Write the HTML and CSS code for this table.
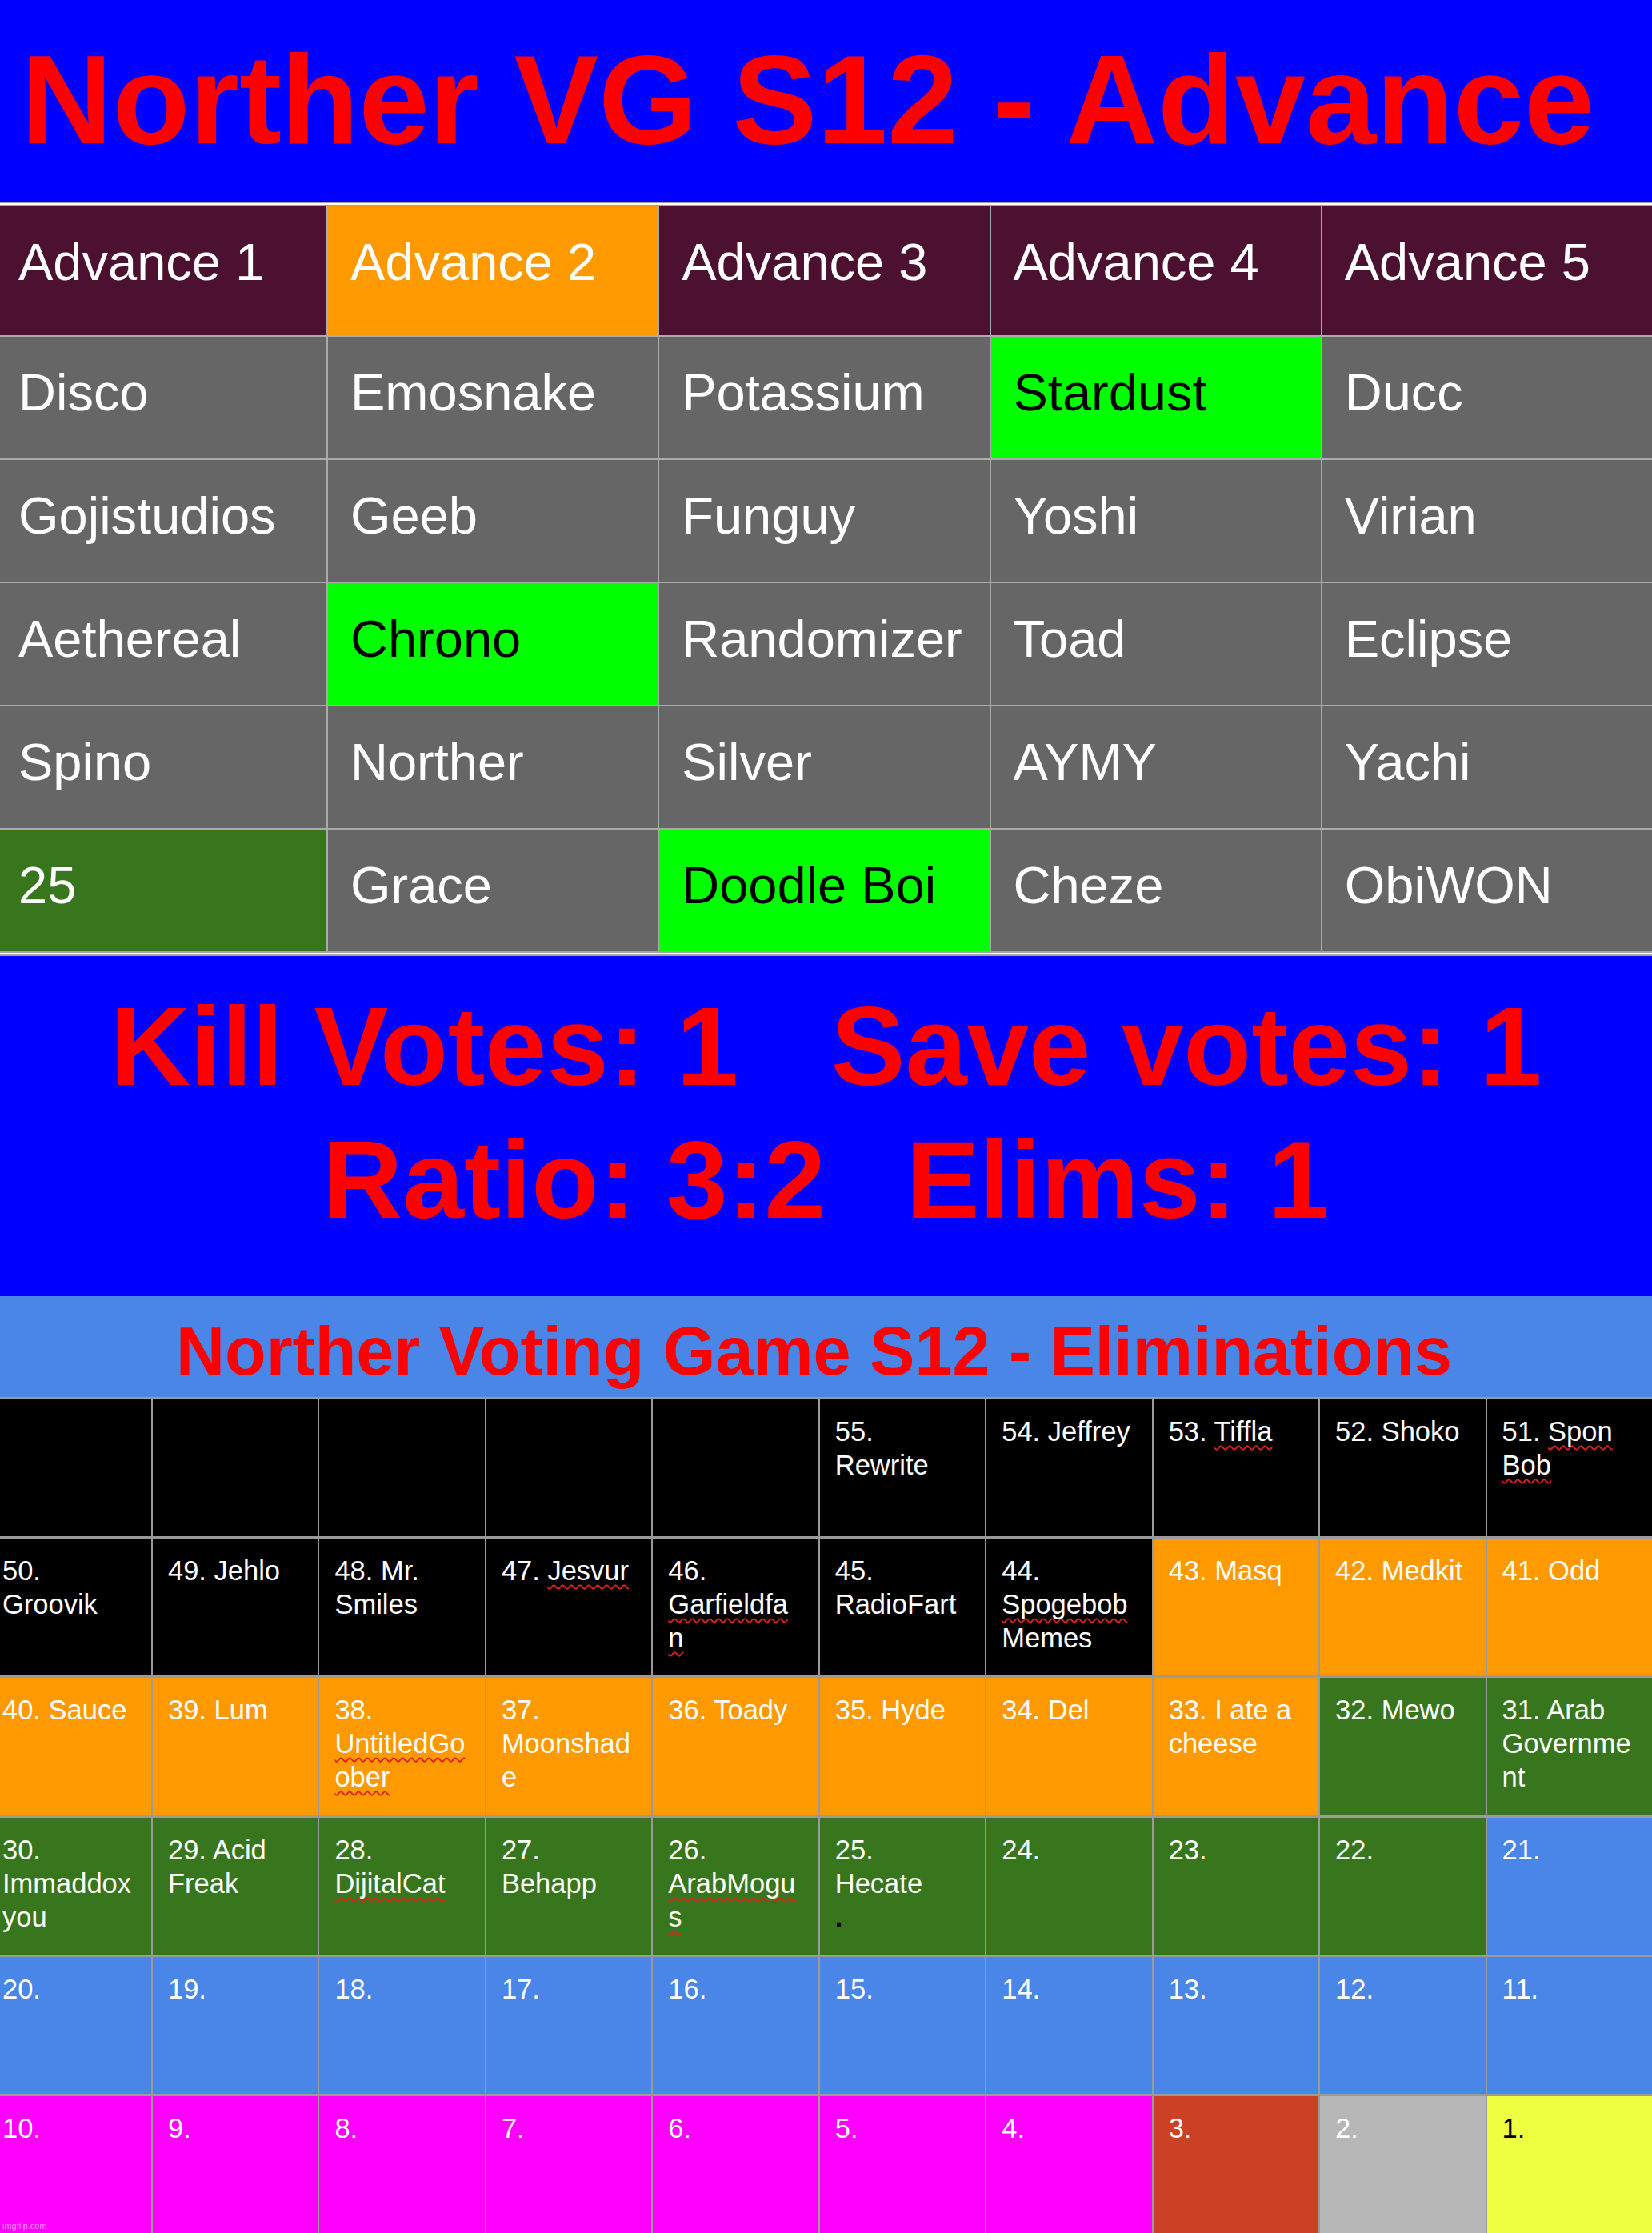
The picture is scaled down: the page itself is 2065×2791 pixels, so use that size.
FILE: index.html
```html
<!DOCTYPE html>
<html lang="en">
<head>
<meta charset="utf-8">
<title>Norther VG S12 - Advance</title>
<link rel="stylesheet" href="styles.css">
</head>
<body>
<div class="page">
  <header class="title">Norther VG S12 - Advance</header>

  <section class="adv-wrap">
    <div class="adv-grid">
      <div class="ac head">Advance 1</div>
      <div class="ac orange">Advance 2</div>
      <div class="ac head">Advance 3</div>
      <div class="ac head">Advance 4</div>
      <div class="ac head">Advance 5</div>

      <div class="ac">Disco</div>
      <div class="ac">Emosnake</div>
      <div class="ac">Potassium</div>
      <div class="ac lime">Stardust</div>
      <div class="ac">Ducc</div>

      <div class="ac">Gojistudios</div>
      <div class="ac">Geeb</div>
      <div class="ac">Funguy</div>
      <div class="ac">Yoshi</div>
      <div class="ac">Virian</div>

      <div class="ac">Aethereal</div>
      <div class="ac lime">Chrono</div>
      <div class="ac">Randomizer</div>
      <div class="ac">Toad</div>
      <div class="ac">Eclipse</div>

      <div class="ac">Spino</div>
      <div class="ac">Norther</div>
      <div class="ac">Silver</div>
      <div class="ac">AYMY</div>
      <div class="ac">Yachi</div>

      <div class="ac forest">25</div>
      <div class="ac">Grace</div>
      <div class="ac lime">Doodle Boi</div>
      <div class="ac">Cheze</div>
      <div class="ac">ObiWON</div>
    </div>
  </section>

  <section class="votes">
    <p class="votes-line">Kill Votes: 1&nbsp;&nbsp; Save votes: 1</p>
    <p class="votes-line second">Ratio: 3:2<span class="votes-gap"></span>Elims: 1</p>
  </section>

  <section class="elim-head">Norther Voting Game S12 - Eliminations</section>

  <div class="elim-grid">
    <div class="ec k"></div>
    <div class="ec k"></div>
    <div class="ec k"></div>
    <div class="ec k"></div>
    <div class="ec k"></div>
    <div class="ec k">55. Rewrite</div>
    <div class="ec k">54. Jeffrey</div>
    <div class="ec k">53. <span class="sp">Tiffla</span></div>
    <div class="ec k">52. Shoko</div>
    <div class="ec k">51. <span class="sp">Spon</span> <span class="sp">Bob</span></div>

    <div class="ec k">50. Groovik</div>
    <div class="ec k">49. Jehlo</div>
    <div class="ec k">48. Mr. Smiles</div>
    <div class="ec k">47. <span class="sp">Jesvur</span></div>
    <div class="ec k">46. <span class="sp">Garfieldfan</span></div>
    <div class="ec k">45. RadioFart</div>
    <div class="ec k">44. <span class="sp">Spogebob</span> Memes</div>
    <div class="ec o">43. Masq</div>
    <div class="ec o">42. Medkit</div>
    <div class="ec o">41. Odd</div>

    <div class="ec o">40. Sauce</div>
    <div class="ec o">39. Lum</div>
    <div class="ec o">38. <span class="sp">UntitledGoober</span></div>
    <div class="ec o">37. Moonshade</div>
    <div class="ec o">36. Toady</div>
    <div class="ec o">35. Hyde</div>
    <div class="ec o">34. Del</div>
    <div class="ec o">33. I ate a cheese</div>
    <div class="ec g">32. Mewo</div>
    <div class="ec g">31. Arab Government</div>

    <div class="ec g">30. Immaddox you</div>
    <div class="ec g">29. Acid Freak</div>
    <div class="ec g">28. <span class="sp">DijitalCat</span></div>
    <div class="ec g">27. Behapp</div>
    <div class="ec g">26. <span class="sp">ArabMogus</span></div>
    <div class="ec g">25. Hecate<br><span class="dot">.</span></div>
    <div class="ec g">24.</div>
    <div class="ec g">23.</div>
    <div class="ec g">22.</div>
    <div class="ec b">21.</div>

    <div class="ec b">20.</div>
    <div class="ec b">19.</div>
    <div class="ec b">18.</div>
    <div class="ec b">17.</div>
    <div class="ec b">16.</div>
    <div class="ec b">15.</div>
    <div class="ec b">14.</div>
    <div class="ec b">13.</div>
    <div class="ec b">12.</div>
    <div class="ec b">11.</div>

    <div class="ec m">10.</div>
    <div class="ec m">9.</div>
    <div class="ec m">8.</div>
    <div class="ec m">7.</div>
    <div class="ec m">6.</div>
    <div class="ec m">5.</div>
    <div class="ec m">4.</div>
    <div class="ec r">3.</div>
    <div class="ec s">2.</div>
    <div class="ec y">1.</div>
  </div>

  <span class="watermark">imgflip.com</span>
</div>
</body>
</html>
```
FILE: styles.css
```css
html, body {
  margin: 0;
  padding: 0;
  background: #ffffff;
}

body {
  width: 2065px;
  height: 2791px;
  overflow: hidden;
  font-family: "Liberation Sans", Arial, sans-serif;
}

.page {
  position: relative;
  width: 2065px;
  height: 2791px;
  display: flex;
  flex-direction: column;
}

/* ---------- Title ---------- */
.title {
  box-sizing: border-box;
  height: 252px;
  background: #0000ff;
  color: #ff0000;
  font-weight: bold;
  font-size: 158.5px;
  line-height: 159px;
  padding: 45px 0 0 26px;
  white-space: nowrap;
}

/* ---------- Advance table ---------- */
.adv-wrap {
  border-top: 6px double #a3a3a3;
  border-bottom: 6px double #a3a3a3;
  background: #ffffff;
}

.adv-grid {
  display: grid;
  grid-template-columns: 408px repeat(4, 1fr);
  grid-template-rows: 161px repeat(5, 152px);
  gap: 2px;
  background: #ababab;
}

.ac {
  background: #666666;
  color: #ffffff;
  font-size: 65px;
  line-height: 65px;
  padding: 37px 0 0 28px;
  white-space: nowrap;
}

.adv-grid > .ac:nth-child(5n+1) {
  padding-left: 23px;
}

.ac.head { background: #4c1130; }
.ac.orange { background: #ff9900; }
.ac.lime { background: #00ff00; color: #000000; }
.ac.forest { background: #38761d; }

/* ---------- Votes ---------- */
.votes {
  box-sizing: border-box;
  height: 425px;
  background: #0000ff;
  color: #ff0000;
  padding-top: 30px;
  text-align: center;
}

.votes-line {
  margin: 0;
  font-weight: bold;
  font-size: 139px;
  line-height: 166px;
  white-space: nowrap;
}

.votes-line.second {
  font-size: 138px;
}

.votes-gap {
  display: inline-block;
  width: 100px;
}

/* ---------- Eliminations heading ---------- */
.elim-head {
  box-sizing: border-box;
  height: 129px;
  background: #4a86e8;
  color: #ff0000;
  font-weight: bold;
  font-size: 84.5px;
  line-height: 84px;
  padding: 27px 30px 0 0;
  text-align: center;
  white-space: nowrap;
  border-bottom: 3px solid #9a9a9a;
}

/* ---------- Eliminations grid ---------- */
.elim-grid {
  flex: 1;
  display: grid;
  grid-template-columns: 189px repeat(9, 1fr);
  grid-template-rows: repeat(6, 1fr);
  gap: 3px 2px;
  background: #9a9a9a;
  min-height: 0;
}

.ec {
  color: #ffffff;
  font-size: 34.5px;
  line-height: 42px;
  padding: 19px 22px 0 19px;
  overflow-wrap: anywhere;
  min-width: 0;
}

.elim-grid > .ec:nth-child(10n+1) {
  padding-left: 3px;
  padding-right: 21px;
}

.ec.k { background: #000000; }
.ec.o { background: #ff9900; }
.ec.g { background: #38761d; }
.ec.b { background: #4a86e8; }
.ec.m { background: #ff00ff; }
.ec.r { background: #cc4125; }
.ec.s { background: #b7b7b7; }
.ec.y { background: #eeff41; color: #000000; }

.sp {
  text-decoration: underline wavy #e0201c;
  text-decoration-thickness: 1.5px;
  text-underline-offset: 5px;
  text-decoration-skip-ink: none;
}

.dot {
  color: #000000;
  font-weight: bold;
}

.watermark {
  position: absolute;
  left: 3px;
  bottom: 3px;
  font-size: 11px;
  line-height: 11px;
  color: rgba(255, 255, 255, 0.55);
}
```
